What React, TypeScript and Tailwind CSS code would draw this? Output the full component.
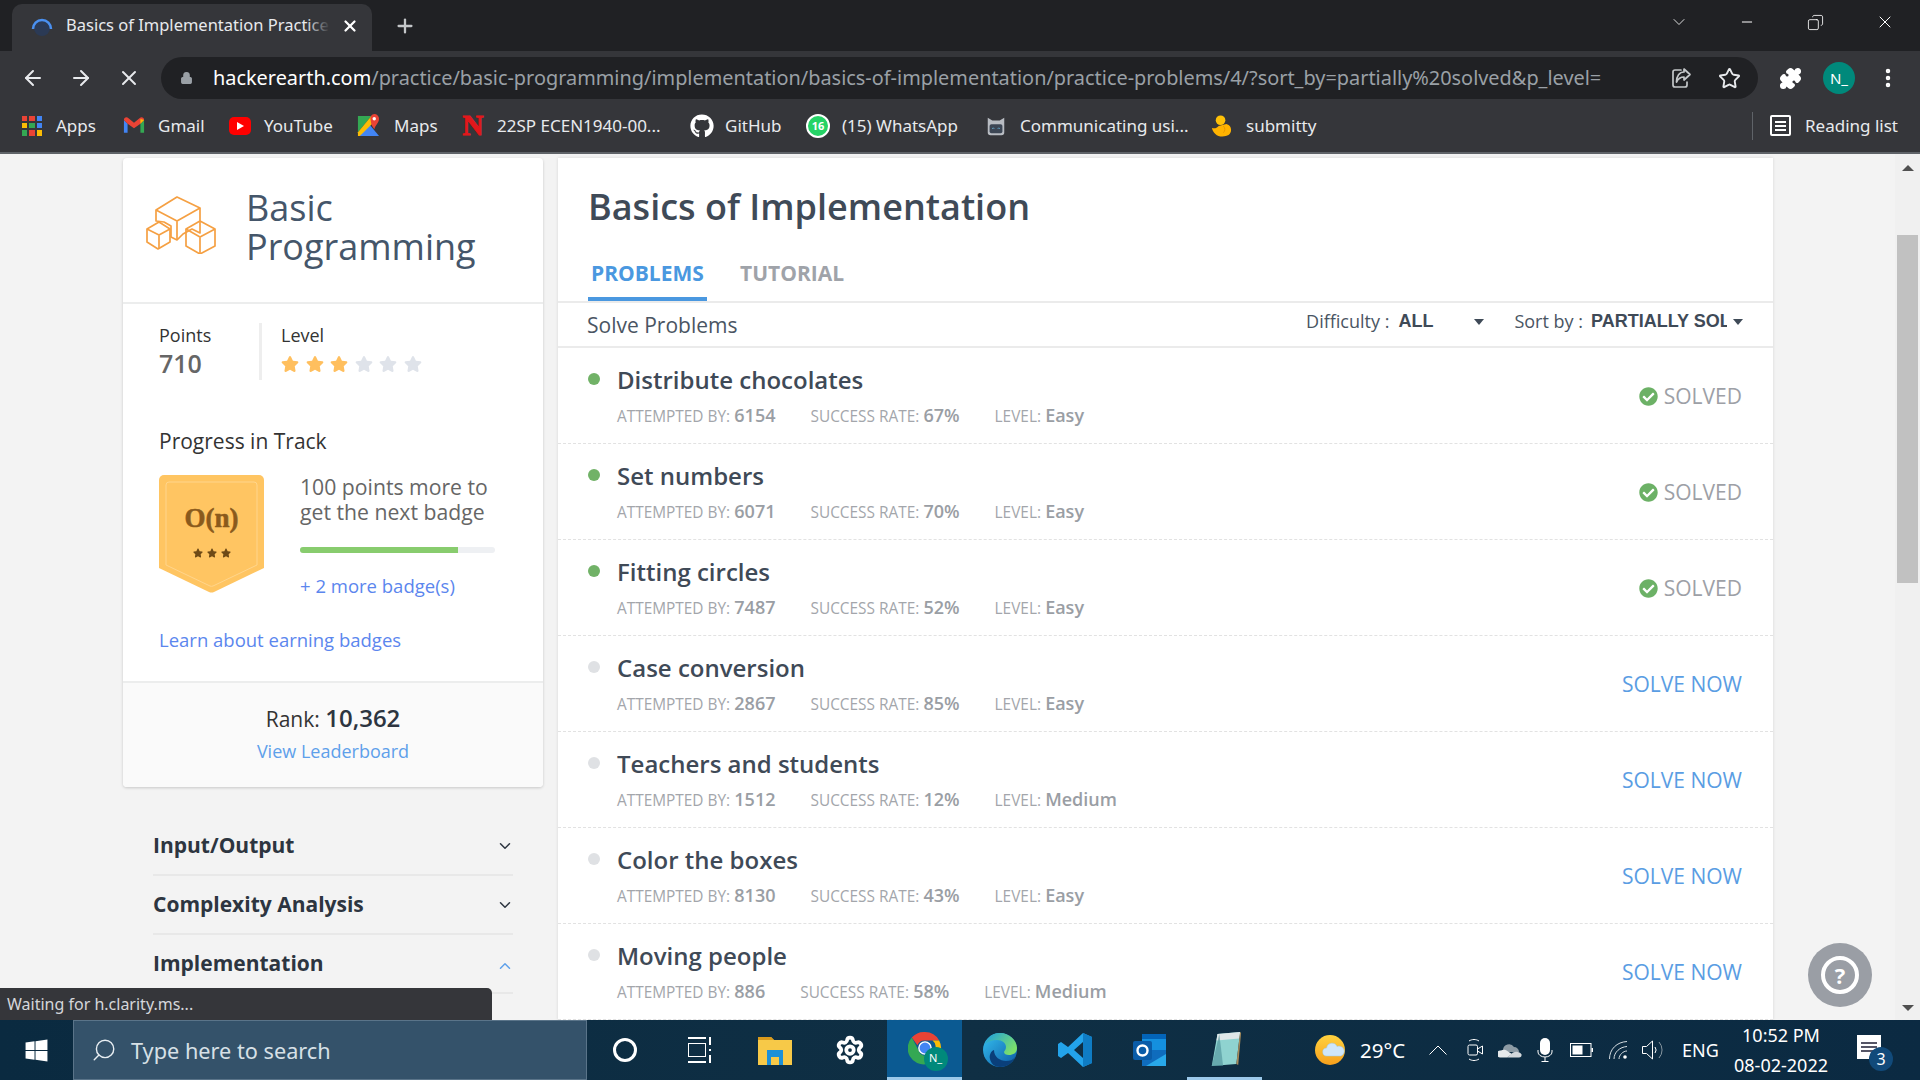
import {
  ArrowLeft, ArrowRight, X, Plus, Lock, Star, ChevronDown, ChevronUp, Minus, Puzzle, MoreVertical,
  Search, Settings, Copy,
} from "lucide-react";
import { FaGithub, FaWindows, FaCheckCircle, FaStar } from "react-icons/fa";

const uiFont = "font-['Noto_Sans','Open_Sans',sans-serif]";

function AppsIcon() {
  const colors = ["#ea4335", "#ea4335", "#4285f4", "#fbbc05", "#34a853", "#4285f4", "#34a853", "#ea4335", "#fbbc05"];
  return (
    <div className="grid grid-cols-3 gap-[2px] w-[20px] h-[20px]">
      {colors.map((c, i) => (
        <span key={i} className="block" style={{ backgroundColor: c }} />
      ))}
    </div>
  );
}

function GmailIcon() {
  return (
    <svg viewBox="0 0 24 20" className="w-[22px] h-[19px]">
      <path d="M1 4v14h4V8z" fill="#4285f4" />
      <path d="M23 4v14h-4V8z" fill="#34a853" />
      <path d="M1 4c0-3 3-4 5-2l6 5 6-5c2-2 5-1 5 2l-4 4-7 5-7-5z" fill="#ea4335" />
      <path d="M19 3l4 1-4 4z" fill="#fbbc05" />
    </svg>
  );
}

function YoutubeIcon() {
  return (
    <div className="w-[22px] h-[18px] rounded-[5px] bg-[#ff0000] flex items-center justify-center">
      <span className="w-0 h-0 border-y-[4px] border-y-transparent border-l-[7px] border-l-white" />
    </div>
  );
}

function MapsIcon() {
  return (
    <svg viewBox="0 0 24 26" className="w-[23px] h-[25px]">
      <path d="M1 3h14L1 20z" fill="#34a853" />
      <path d="M1 24l12-12 10 12z" fill="#4285f4" />
      <path d="M1 20L15 3h3v6L3 24H1z" fill="#fbbc05" />
      <path d="M18 1a5 5 0 0 1 5 5c0 4-4 7-5 11-1-2-2-3-3-5l-1-6a5 5 0 0 1 4-5z" fill="#ea4335" />
      <circle cx="18" cy="6" r="1.8" fill="#fff" />
    </svg>
  );
}

function WhatsappIcon() {
  return (
    <div className="relative w-[24px] h-[24px] rounded-full bg-[#25d366] border-[2px] border-white flex items-center justify-center text-[11px] font-bold text-white leading-none">
      16
    </div>
  );
}

function CatIcon() {
  return (
    <svg viewBox="0 0 24 24" className="w-[22px] h-[24px]">
      <path d="M3 3l5 3h8l5-3v16a3 3 0 0 1-3 3H6a3 3 0 0 1-3-3z" fill="#b8bcc2" />
      <rect x="5" y="10" width="14" height="10" rx="2" fill="#3c4654" />
      <path d="M8 15l1-1 1 1M14 15l1-1 1 1" stroke="#6fc2ea" fill="none" strokeWidth="1" />
    </svg>
  );
}

function DuckIcon() {
  return (
    <svg viewBox="0 0 24 24" className="w-[23px] h-[24px]">
      <circle cx="11" cy="6" r="5" fill="#ffc107" />
      <path d="M2 14c3 1 5 0 7-2l8-2c4 1 5 4 5 6 0 5-4 7-9 7-6 0-10-4-11-9z" fill="#ffb300" />
      <path d="M14 12c2 2 2 5 0 7" stroke="#e69500" fill="none" strokeWidth="1" />
    </svg>
  );
}

function ShareIcon() {
  return (
    <svg viewBox="0 0 24 24" className="ml-auto w-[24px] h-[24px] text-[#c4c7c9]" fill="none" stroke="currentColor" strokeWidth="1.7" strokeLinejoin="round" strokeLinecap="round">
      <path d="M12 4H6a2 2 0 0 0-2 2v13a2 2 0 0 0 2 2h10a2 2 0 0 0 2-2v-3" />
      <path d="M15 3l6 5.5-6 5.5v-3c-4 0-6 2-7.5 5 0-6 3-10 7.5-10z" />
    </svg>
  );
}

const bookmarks = [
  { label: "Apps", icon: <AppsIcon />, cls: "w-[101px] gap-[14px]" },
  { label: "Gmail", icon: <GmailIcon />, cls: "w-[106px] gap-[13px]" },
  { label: "YouTube", icon: <YoutubeIcon />, cls: "w-[128px] gap-[13px]" },
  { label: "Maps", icon: <MapsIcon />, cls: "w-[105px] gap-[14px]" },
  { label: "22SP ECEN1940-00...", icon: <span className="text-[#e3171b] font-['Liberation_Serif',serif] font-bold text-[29px] leading-none w-[22px] text-center [-webkit-text-stroke:1px_#e3171b]">N</span>, cls: "w-[228px] gap-[13px]" },
  { label: "GitHub", icon: <FaGithub className="w-[24px] h-[24px] text-white" />, cls: "w-[116px] gap-[11px]" },
  { label: "(15) WhatsApp", icon: <WhatsappIcon />, cls: "w-[179px] gap-[12px]" },
  { label: "Communicating usi...", icon: <CatIcon />, cls: "w-[225px] gap-[13px]" },
  { label: "submitty", icon: <DuckIcon />, cls: "w-[120px] gap-[13px]" },
];

function ChromeBar() {
  return (
    <div className={`${uiFont} shrink-0`}>
      {/* tabs */}
      <div className="h-[51px] bg-[#202124] flex items-end pl-[12px] text-white">
        <div className="relative w-[360px] h-[47px] bg-[#35363a] rounded-t-[10px] flex items-center pl-[18px] pb-[4px]">
          <svg viewBox="0 0 24 24" className="w-[24px] h-[24px] shrink-0">
            <circle cx="12" cy="14" r="8" fill="#2b3a55" />
            <path d="M3 15a9 9 0 0 1 18 0" fill="none" stroke="#4a90f0" strokeWidth="2.5" />
          </svg>
          <span className="relative ml-[12px] w-[264px] overflow-hidden whitespace-nowrap text-[16.5px] text-[#e8eaed]">
            Basics of Implementation Practice
            <span className="absolute right-0 top-0 h-full w-[24px] bg-gradient-to-r from-transparent to-[#35363a]" />
          </span>
          <X className="ml-[11px] w-[18px] h-[18px] text-white" strokeWidth={3} />
        </div>
        <Plus className="ml-[22px] mb-[14px] w-[22px] h-[22px] text-[#c4c7c9]" strokeWidth={2.5} />
        <div className="ml-auto flex items-center h-full pb-[7px] text-white">
          <ChevronDown className="w-[20px] h-[20px] mr-[50px]" strokeWidth={1} />
          <Minus className="w-[16px] h-[16px] mr-[52px]" strokeWidth={1.5} />
          <Copy className="w-[17px] h-[17px] mr-[51px] -scale-x-100" strokeWidth={1.2} />
          <X className="w-[20px] h-[20px] mr-[25px]" strokeWidth={1.2} />
        </div>
      </div>
      {/* toolbar */}
      <div className="h-[50px] pt-[4px] bg-[#35363a] flex items-center text-[#e8eaed]">
        <ArrowLeft className="ml-[21px] w-[24px] h-[24px]" strokeWidth={2} />
        <ArrowRight className="ml-[24px] w-[24px] h-[24px]" strokeWidth={2} />
        <X className="ml-[24px] w-[24px] h-[24px]" strokeWidth={2} />
        <div className="ml-[20px] w-[1597px] h-[42px] rounded-full bg-[#202124] flex items-center pl-[19px] pr-[17px]">
          <Lock className="w-[13px] h-[16px] text-[#9aa0a6]" fill="#9aa0a6" />
          <span className="ml-[20px] whitespace-nowrap text-[19.9px] text-[#9aa0a6]">
            <span className="text-white">hackerearth.com</span>/practice/basic-programming/implementation/basics-of-implementation/practice-problems/4/?sort_by=partially%20solved&amp;p_level=
          </span>
          <ShareIcon />
          <Star className="ml-[25px] w-[23px] h-[23px] text-[#e8eaed]" strokeWidth={2} />
        </div>
        <Puzzle className="ml-[21px] w-[23px] h-[23px] text-white" fill="#fff" />
        <div className="ml-[21px] w-[32px] h-[32px] rounded-full bg-[#00897b] flex items-center justify-center text-[15px] text-white">N_</div>
        <MoreVertical className="ml-[21px] w-[24px] h-[24px] text-white" strokeWidth={2.5} />
      </div>
      {/* bookmarks */}
      <div className="h-[53px] pb-[2px] bg-[#35363a] border-b-[2px] border-[#5f6368] flex items-center pl-[22px] text-[17px] text-[#e8eaed]">
        {bookmarks.map((b) => (
          <div key={b.label} className={`flex items-center whitespace-nowrap ${b.cls}`}>
            {b.icon}
            <span>{b.label}</span>
          </div>
        ))}
        <div className="ml-auto flex items-center h-[28px] pl-[17px] pr-[22px] border-l border-[#5f6368] gap-[14px]">
          <div className="w-[21px] h-[21px] border-[2px] border-white rounded-[2px] flex flex-col justify-center gap-[2px] px-[3px]">
            <span className="block h-[2px] bg-white" />
            <span className="block h-[2px] bg-white" />
            <span className="block h-[2px] bg-white" />
          </div>
          <span className="whitespace-nowrap">Reading list</span>
        </div>
      </div>
    </div>
  );
}

function CubesIcon() {
  return (
    <svg viewBox="0 0 70 58" className="w-[70px] h-[58px] -mt-[10px]" fill="none" stroke="#f5a043" strokeWidth="1.7" strokeLinejoin="round">
      <path d="M10 14L31 1l23 11v25l-8 -4-9 5-6 6-6-3V30l-7-4-8-1z" />
      <path d="M10 14l21 11 23-13M31 25v19" />
      <path d="M1 33l12-7 11 7v13l-12 7-11-7z" />
      <path d="M1 33l12 6 11-6M13 39v14" />
      <path d="M40 33l14-8 15 8v17l-15 8-14-8z" />
      <path d="M40 33l14 8 15-8M54 41v17" />
    </svg>
  );
}

function BadgeIcon() {
  return (
    <div className="relative w-[105px] h-[118px]">
      <svg viewBox="0 0 105 118" className="absolute inset-0 w-full h-full">
        <path d="M5 0h95a5 5 0 0 1 5 5v88l-50 24a6 6 0 0 1-5 0L0 93V5a5 5 0 0 1 5-5z" fill="#ffc562" />
        <path d="M10 7h85a3 3 0 0 1 3 3v80l-44 21a4 4 0 0 1-3 0L7 90V10a3 3 0 0 1 3-3z" fill="none" stroke="#ffd58c" strokeWidth="1" />
      </svg>
      <div className="absolute inset-x-0 top-[26px] text-center font-['Liberation_Serif',serif] font-bold text-[27px] leading-[34px] text-[#8a5a1c] [-webkit-text-stroke:0.5px_#8a5a1c]">O(n)</div>
      <div className="absolute inset-x-0 top-[73px] flex justify-center gap-[4px] text-[#6e4a16]">
        <FaStar className="w-[10px] h-[10px]" />
        <FaStar className="w-[10px] h-[10px]" />
        <FaStar className="w-[10px] h-[10px]" />
      </div>
    </div>
  );
}

function Sidebar() {
  return (
    <div className="w-[420px] shrink-0">
      <div className="bg-white rounded-[4px] shadow-[0_1px_3px_rgba(0,0,0,0.18)]">
        <div className="h-[146px] border-b-[2px] border-[#eceded] flex items-center pl-[23px]">
          <CubesIcon />
          <div className="ml-[30px] text-[36px] leading-[39px] text-[#45566a] mb-[6px]">Basic<br />Programming</div>
        </div>
        <div className="flex pl-[36px] pt-[19px]">
          <div className="w-[100px] h-[57px]">
            <div className="text-[18px] leading-[25px] text-[#333]">Points</div>
            <div className="text-[25px] leading-[31px] font-semibold text-[#666]">710</div>
          </div>
          <div className="w-[3px] h-[57px] bg-[#eeeeee]" />
          <div className="pl-[19px]">
            <div className="text-[18px] leading-[25px] text-[#333]">Level</div>
            <div className="flex gap-[6.5px] mt-[7px]">
              {[0, 1, 2, 3, 4, 5].map((i) => (
                <FaStar key={i} className={`w-[18px] h-[18px] ${i < 3 ? "text-[#ffbf5e]" : "text-[#dfe3ea]"}`} />
              ))}
            </div>
          </div>
        </div>
        <div className="pl-[36px] pt-[48px]">
          <div className="text-[21px] leading-[27px] text-[#333]">Progress in Track</div>
          <div className="flex mt-[20px]">
            <BadgeIcon />
            <div className="ml-[36px] w-[195px] -mt-[1px]">
              <div className="text-[21.2px] leading-[25px] text-[#666] whitespace-nowrap">100 points more to<br />get the next badge</div>
              <div className="mt-[23px] h-[6px] rounded-[3px] bg-[#eef0f3] overflow-hidden">
                <div className="h-full w-[158px] bg-[#88cc6e]" />
              </div>
              <div className="mt-[20px] text-[18.5px] leading-[25px] text-[#5b86ee]">+ 2 more badge(s)</div>
            </div>
          </div>
          <div className="mt-[29px] text-[18.5px] leading-[25px] text-[#5b86ee]">Learn about earning badges</div>
        </div>
        <div className="mt-[29px] h-[106px] border-t-[2px] border-[#eceded] bg-[#fafafa] rounded-b-[4px] flex flex-col items-center pt-[18px]">
          <div className="text-[21px] leading-[33px] text-[#333]">Rank: <span className="text-[24px] font-semibold text-[#2d3540]">10,362</span></div>
          <div className="text-[18px] leading-[25px] mt-[3px] text-[#5ea0ea]">View Leaderboard</div>
        </div>
      </div>
      <div className="mt-[30px] mx-[30px]">
        {["Input/Output", "Complexity Analysis", "Implementation"].map((t, i) => (
          <div key={t} className="h-[59px] border-b-[2px] border-[#e8e8e8] flex items-center justify-between pt-[1px]">
            <span className="text-[21px] font-bold text-[#2d3540]">{t}</span>
            {i < 2 ? (
              <ChevronDown className="w-[18px] h-[18px] mr-[-1px] text-[#2d3540]" strokeWidth={2} />
            ) : (
              <ChevronUp className="w-[18px] h-[18px] mr-[-1px] mt-[3px] text-[#5ea0ea]" strokeWidth={2} />
            )}
          </div>
        ))}
      </div>
    </div>
  );
}

const problems = [
  { name: "Distribute chocolates", by: "6154", rate: "67%", level: "Easy", solved: true },
  { name: "Set numbers", by: "6071", rate: "70%", level: "Easy", solved: true },
  { name: "Fitting circles", by: "7487", rate: "52%", level: "Easy", solved: true },
  { name: "Case conversion", by: "2867", rate: "85%", level: "Easy", solved: false },
  { name: "Teachers and students", by: "1512", rate: "12%", level: "Medium", solved: false },
  { name: "Color the boxes", by: "8130", rate: "43%", level: "Easy", solved: false },
  { name: "Moving people", by: "886", rate: "58%", level: "Medium", solved: false },
];

function Meta({ label, value }: { label: string; value: string }) {
  return (
    <span className="mr-[35px] whitespace-nowrap">
      <span className="text-[15.4px] text-[#a3a6ab]">{label}:</span>{" "}
      <span className="text-[18px] font-semibold text-[#9a9ea4]">{value}</span>
    </span>
  );
}

function ProblemRow({ p }: { p: (typeof problems)[number] }) {
  return (
    <div className="h-[96px] border-b border-dashed border-[#e2e2e2] flex items-center pl-[30px] pr-[31px]">
      <div className={`w-[12px] h-[12px] rounded-full shrink-0 -mt-[33px] ${p.solved ? "bg-[#71b267]" : "bg-[#dfe1e4]"}`} />
      <div className="ml-[17px]">
        <div className="text-[24px] leading-[33px] font-semibold text-[#3f4a57]">{p.name}</div>
        <div className="mt-[7px] leading-[25px] flex items-baseline">
          <Meta label="ATTEMPTED BY" value={p.by} />
          <Meta label="SUCCESS RATE" value={p.rate} />
          <Meta label="LEVEL" value={p.level} />
        </div>
      </div>
      {p.solved ? (
        <div className="ml-auto pt-[2px] flex items-center gap-[6px] text-[21px] text-[#9da0a6]">
          <FaCheckCircle className="w-[19px] h-[19px] text-[#6cb166]" />
          SOLVED
        </div>
      ) : (
        <div className="ml-auto pt-[2px] text-[21px] text-[#5a9de3]">SOLVE NOW</div>
      )}
    </div>
  );
}

function Caret() {
  return <span className="w-0 h-0 border-x-[5px] border-x-transparent border-t-[6px] border-t-[#3f4a57]" />;
}

function MainPanel() {
  return (
    <div className="ml-[15px] w-[1215px] shrink-0 bg-white shadow-[0_0_3px_rgba(0,0,0,0.12)] h-full overflow-hidden">
      <div className="h-[145px] border-b-[2px] border-[#ebebeb] pl-[30px] flex flex-col">
        <h1 className="pt-[24px] text-[36px] leading-[50px] font-semibold text-[#3f4a57]">Basics of Implementation</h1>
        <div className="mt-auto flex gap-[33px]">
          <div className="w-[119px] h-[44px] border-b-[4px] border-[#4a98e0] text-[21px] font-bold text-[#4a98e0] pt-[2px] pl-[3px] leading-[28px] whitespace-nowrap">PROBLEMS</div>
          <div className="h-[44px] text-[21px] font-bold text-[#9fa3a9] pt-[2px] leading-[28px]">TUTORIAL</div>
        </div>
      </div>
      <div className="h-[45px] border-b-[2px] border-[#ebebeb] pl-[29px] pr-[30px] flex items-center">
        <span className="text-[21px] pt-[2px] text-[#4a5563]">Solve Problems</span>
        <div className="ml-auto flex items-center -mt-[6px] text-[18px] text-[#4a5563]">
          <span>Difficulty :</span>
          <span className="ml-[9px] w-[76px] font-['Liberation_Sans',sans-serif] font-bold text-[#3f4a57]">ALL</span>
          <Caret />
          <span className="ml-[30px]">Sort by :</span>
          <span className="ml-[8px] mr-[6px] w-[136px] overflow-hidden whitespace-nowrap font-['Liberation_Sans',sans-serif] font-bold text-[#3f4a57]">PARTIALLY SOLVED</span>
          <Caret />
        </div>
      </div>
      {problems.map((p) => (
        <ProblemRow key={p.name} p={p} />
      ))}
    </div>
  );
}

function Scrollbar() {
  return (
    <div className="ml-auto w-[25px] -mt-[4px] h-[calc(100%+4px)] bg-[#f0f0f0] flex flex-col items-center">
      <span className="mt-[11px] w-0 h-0 border-x-[6px] border-x-transparent border-b-[6px] border-b-[#505050]" />
      <div className="mt-[64px] w-[21px] h-[348px] bg-[#c1c1c1]" />
      <span className="mt-auto mb-[9px] w-0 h-0 border-x-[6px] border-x-transparent border-t-[6px] border-t-[#505050]" />
    </div>
  );
}

function ChromeLogo() {
  return (
    <div className="relative w-[34px] h-[36px]">
      <svg viewBox="0 0 36 36" className="w-[34px] h-[34px]">
        <path d="M18 1a17 17 0 0 1 15 9H18a8 8 0 0 0-8 5L4 7a17 17 0 0 1 14-6z" fill="#ea4335" />
        <path d="M33 10a17 17 0 0 1-13 25l7-13a8 8 0 0 0-1-12z" fill="#fbbc05" />
        <path d="M4 7l7 13a8 8 0 0 0 9 6l-0 9A17 17 0 0 1 4 7z" fill="#34a853" />
        <circle cx="18" cy="18" r="6.5" fill="#4285f4" stroke="#fff" strokeWidth="1.5" />
      </svg>
      <div className="absolute -right-[6px] -bottom-[4px] w-[24px] h-[24px] rounded-full bg-[#00897b] flex items-center justify-center text-[11px] text-white">N_</div>
    </div>
  );
}

function EdgeLogo() {
  return (
    <svg viewBox="0 0 36 36" className="w-[36px] h-[36px]">
      <defs>
        <linearGradient id="edgeA" x1="0" y1="0" x2="1" y2="1">
          <stop offset="0" stopColor="#35c1f1" />
          <stop offset="1" stopColor="#0c59a4" />
        </linearGradient>
        <linearGradient id="edgeB" x1="0" y1="0" x2="1" y2="0.6">
          <stop offset="0" stopColor="#1b9de2" />
          <stop offset="1" stopColor="#7de06a" />
        </linearGradient>
      </defs>
      <circle cx="18" cy="18" r="17" fill="url(#edgeA)" />
      <path d="M3 12C6 4 12 1 18 1c9 0 17 7 17 15 0 5-4 7-8 7-3 0-5-1-5-3 0-1 2-2 2-5 0-4-4-7-9-7-5 0-9 2-12 4z" fill="url(#edgeB)" />
      <path d="M12 18c0 7 6 11 12 11 4 0 7-1 9-4-3 7-9 10-15 10-5 0-9-3-10-8-1-4 1-8 4-9z" fill="#0a3f7a" />
    </svg>
  );
}

function VsCodeLogo() {
  return (
    <svg viewBox="0 0 36 36" className="w-[36px] h-[36px]">
      <path d="M26 1l9 4v26l-9 4-15-14-7 5-3-2V12l3-2 7 5zM26 10l-9 8 9 8z" fill="#23a3ea" />
      <path d="M26 1l9 4v26l-9 4z" fill="#0f7cc4" />
    </svg>
  );
}

function OutlookLogo() {
  return (
    <svg viewBox="0 0 36 36" className="w-[36px] h-[36px]">
      <rect x="10" y="2" width="24" height="16" fill="#1490df" />
      <rect x="10" y="2" width="24" height="5" fill="#0364b8" />
      <path d="M10 18h24v16H10z" fill="#0f6cbd" />
      <path d="M14 34l20-12v12z" fill="#28a8ea" />
      <rect x="1" y="9" width="19" height="19" rx="2" fill="#0a5ca8" />
      <circle cx="10.5" cy="18.5" r="5" fill="none" stroke="#fff" strokeWidth="2.4" />
    </svg>
  );
}

function NotepadLogo() {
  return (
    <svg viewBox="0 0 36 40" className="w-[34px] h-[38px]">
      <path d="M10 4l24 -2-4 34-26 2z" fill="#8fd3d0" />
      <path d="M10 4l24-2-1 7-24 2z" fill="#dfe7e8" />
      <path d="M30 36l4-34 1 1-3 34z" fill="#a58a5b" />
      <path d="M4 38l8-34 4 34z" fill="#4c8f98" opacity="0.6" />
    </svg>
  );
}

function WeatherIcon() {
  return (
    <svg viewBox="0 0 30 30" className="ml-[53px] w-[30px] h-[30px] shrink-0">
      <defs>
        <linearGradient id="sun" x1="0" y1="0" x2="0" y2="1">
          <stop offset="0" stopColor="#ffd23f" />
          <stop offset="1" stopColor="#f7a01c" />
        </linearGradient>
      </defs>
      <circle cx="15" cy="15" r="15" fill="url(#sun)" />
      <path d="M12 21a4 4 0 0 1-.5-8 5.5 5.5 0 0 1 10.5-1.5A4.8 4.8 0 0 1 26 21z" fill="#cfe6f9" stroke="#9cc9ea" strokeWidth="0.5" />
    </svg>
  );
}

function MeetIcon() {
  return (
    <svg viewBox="0 0 16 24" className="ml-[20px] w-[16px] h-[24px] shrink-0" fill="none" stroke="#fff" strokeWidth="1">
      <path d="M2 3c3-2 7-2 10 0M2 21c3 2 7 2 10 0" />
      <rect x="1" y="7" width="9.5" height="10" rx="1.5" />
      <path d="M10.5 11l5-3v8l-5-3" />
    </svg>
  );
}

function OneDriveIcon() {
  return (
    <svg viewBox="0 0 24 16" className="ml-[15px] w-[24px] h-[16px] shrink-0">
      <path d="M5 8a6 6 0 0 1 11-3 5 5 0 0 1 5 5H6z" fill="#8d9ba5" />
      <path d="M2 15.5a3.5 3.5 0 0 1 1-7c2-1 5-1 7 1l4 2.5-5 3.5z" fill="#e6e9eb" />
      <path d="M9 15.5l6-5c3-1.500 7-1 8.500 2 .5 2-1 3-2.500 3z" fill="#d2d7db" />
    </svg>
  );
}

function MicIcon() {
  return (
    <svg viewBox="0 0 16 24" className="ml-[15px] w-[16px] h-[24px] shrink-0" fill="none" stroke="#fff" strokeWidth="1">
      <rect x="3" y="0" width="10" height="17" rx="5" fill="#fff" stroke="none" />
      <path d="M1 12v2a7 5 0 0 0 14 0v-2M8 19v4M4.500 23.500h7" />
    </svg>
  );
}

function BatteryIcon() {
  return (
    <svg viewBox="0 0 23 14" className="ml-[17px] w-[23px] h-[14px] shrink-0">
      <rect x="0.500" y="0.500" width="20.500" height="13" fill="none" stroke="#fff" />
      <rect x="2.500" y="2.500" width="10" height="9" fill="#fff" />
      <rect x="21.500" y="5" width="1.500" height="4" fill="#fff" />
    </svg>
  );
}

function WifiIcon() {
  return (
    <svg viewBox="0 0 18 18" className="ml-[16px] w-[18px] h-[18px] shrink-0" fill="none" stroke="#d6dde2" strokeWidth="1">
      <path d="M0.500 18C.5 8 8 1 18 .5" />
      <path d="M5 18c0-7 6-12 13-12.500" />
      <path d="M10 18c0-4 4-8 8-8" />
      <circle cx="16" cy="16" r="1.800" fill="#fff" stroke="none" />
    </svg>
  );
}

function VolumeIcon() {
  return (
    <svg viewBox="0 0 22 22" className="ml-[15px] w-[22px] h-[22px] shrink-0" fill="none" stroke="#fff" strokeWidth="1">
      <path d="M.5 7.500h4L10.500 2v18l-6-5.500h-4z" />
      <path d="M13 8a5 5 0 0 1 0 6" />
      <path d="M17 3a12 12 0 0 1 0 16" stroke="#8796a0" />
    </svg>
  );
}

function Taskbar() {
  const slot = "w-[75px] h-full flex items-center justify-center shrink-0";
  return (
    <div className={`${uiFont} h-[60px] shrink-0 bg-gradient-to-r from-[#0a2a40] via-[#0f2f44] to-[#0b2a42] flex items-center text-white`}>
      <div className="w-[73px] shrink-0 flex items-center justify-center">
        <FaWindows className="w-[25px] h-[25px]" />
      </div>
      <div className="w-[514px] h-full bg-[#34526a] border border-[#5a7489] flex items-center shrink-0 pl-[17px]">
        <Search className="w-[26px] h-[26px] -scale-x-100 text-[#e8eef2]" strokeWidth={1.3} />
        <span className="ml-[14px] pt-[2px] text-[21.7px] text-[#d7e0e6]">Type here to search</span>
      </div>
      <div className={slot}>
        <span className="w-[24px] h-[24px] rounded-full border-[3px] border-white" />
      </div>
      <div className={slot}>
        <div className="w-[24px] h-[26px] flex items-center gap-[3px]">
          <div className="w-[18px] h-full flex flex-col justify-between">
            <span className="block h-[2px] bg-white" />
            <span className="block h-[14px] border border-white" />
            <span className="block h-[2px] bg-white" />
          </div>
          <div className="w-[2px] h-full flex flex-col justify-between">
            <span className="block h-[8px] bg-white" />
            <span className="block h-[2px] bg-white" />
            <span className="block h-[8px] bg-white" />
          </div>
        </div>
      </div>
      <div className={slot}>
        <svg viewBox="0 0 34 30" className="w-[34px] h-[30px]">
          <path d="M0 2h13l3 3h18v25H0z" fill="#f7c948" />
          <path d="M0 2h13l3 3H0z" fill="#d99a1c" />
          <rect x="9" y="15" width="16" height="15" fill="#1c90d8" />
          <rect x="13" y="22" width="8" height="8" fill="#f7c948" />
        </svg>
      </div>
      <div className={slot}>
        <Settings className="w-[30px] h-[30px]" strokeWidth={3} />
      </div>
      <div className={`${slot} bg-[#0b5a92] border-b-[3px] border-[#9cc9ea]`}>
        <ChromeLogo />
      </div>
      <div className={slot}><EdgeLogo /></div>
      <div className={slot}><VsCodeLogo /></div>
      <div className={slot}><OutlookLogo /></div>
      <div className={`${slot} border-b-[3px] border-[#9cc9ea]`}><NotepadLogo /></div>
      <WeatherIcon />
      <span className="ml-[15px] w-[42px] text-[20.5px] whitespace-nowrap">29°C</span>
      <svg viewBox="0 0 18 10" className="ml-[27px] w-[18px] h-[10px] shrink-0" fill="none" stroke="#fff" strokeWidth="1">
        <path d="M0.500 9.500L9 1l8.500 8.500" />
      </svg>
      <MeetIcon />
      <OneDriveIcon />
      <MicIcon />
      <BatteryIcon />
      <WifiIcon />
      <VolumeIcon />
      <span className="ml-[18px] w-[34px] text-[18px]">ENG</span>
      <div className="ml-[18px] w-[94px] text-center text-[18px] leading-[30px] whitespace-nowrap">
        <div>10:52 PM</div>
        <div>08-02-2022</div>
      </div>
      <div className="relative ml-[29px] w-[24px] h-[30px]">
        <div className="w-[24px] h-[24px] bg-white flex flex-col gap-[2px] justify-center px-[4px]">
          <span className="block h-[2px] bg-[#556]" />
          <span className="block h-[2px] bg-[#556]" />
          <span className="block h-[2px] bg-[#556]" />
        </div>
        <div className="absolute left-[12px] top-[12px] w-[24px] h-[24px] rounded-full bg-[#114a7a] flex items-center justify-center text-[16px]">3</div>
      </div>
    </div>
  );
}

export default function App() {
  return (
    <div className="relative w-[1920px] h-[1080px] overflow-hidden flex flex-col bg-[#f3f3f3] font-['Open_Sans',sans-serif]">
      <ChromeBar />
      <div className="flex-1 min-h-0 flex pl-[123px] pt-[4px]">
        <Sidebar />
        <MainPanel />
        <Scrollbar />
      </div>
      <Taskbar />

      {/* status bubble and help button sit on top of the page */}
      <div className={`${uiFont} absolute left-0 top-[988px] w-[492px] h-[32px] bg-[#35363a] rounded-tr-[5px] pl-[7px] text-[16px] leading-[32px] text-[#d5d7da]`}>
        Waiting for h.clarity.ms...
      </div>
      <div className="absolute left-[1808px] top-[943px] w-[64px] h-[64px] rounded-full bg-[#9a9ea5] flex items-center justify-center">
        <div className="w-[38px] h-[38px] rounded-full border-[4px] border-white flex items-center justify-center text-[22px] font-bold text-white leading-none">?</div>
      </div>
    </div>
  );
}
